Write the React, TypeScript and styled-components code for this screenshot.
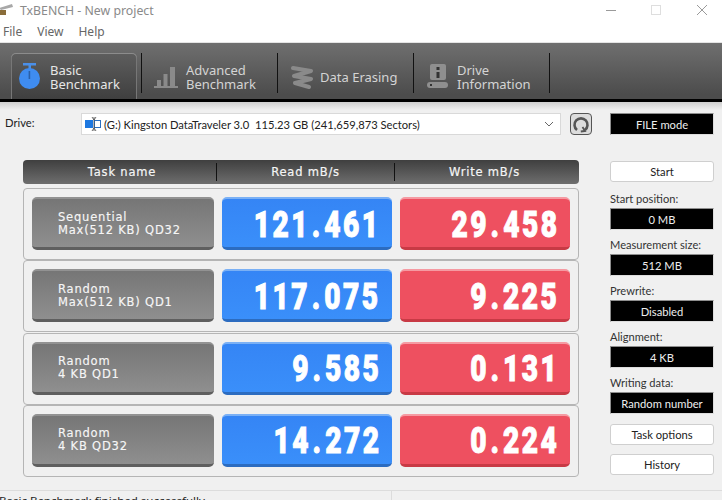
import React from "react";
import styled, { createGlobalStyle } from "styled-components";

const Global = createGlobalStyle`
  html, body { margin: 0; padding: 0; background: #f0f0f0; }
  * { box-sizing: border-box; }
`;
const ui = `"Noto Sans", "Open Sans", sans-serif`;
const small = `"Lato", "Noto Sans", sans-serif`;
const Page = styled.div`
  width: 722px; height: 500px; overflow: hidden; background: #f0f0f0;
  font-family: ${ui}; display: flex; flex-direction: column;
`;
const TitleBar = styled.div`
  height: 21px; background: #fff; display: flex; align-items: center; position: relative;
  padding-left: 20px; font-size: 12.3px; color: #8a8a8a; flex: none;
`;
const WinControls = styled.svg`position: absolute; right: 0; top: 0;`;
const AppIcon = styled.svg`position: absolute; left: -2px; top: 1px;`;
const MenuBar = styled.div`
  height: 21px; background: #fff; display: flex; gap: 15px; padding-left: 3px; align-items: center;
  font-size: 12px; color: #666; flex: none;
`;
const Toolbar = styled.div`
  height: 60px; flex: none; display: flex; align-items: flex-start; padding: 10px 0 0 11px;
  background: linear-gradient(#6f6f6f, #4c4c4c 92%);
  border-top: 1px solid #e4e4e4; border-bottom: 3px solid #000;
`;
const Tab = styled.div<{ $active?: boolean; $gap: number }>`
  width: 126px; height: 46px; display: flex; align-items: center; padding: 1px 0 0 7px; gap: ${(p) => p.$gap}px;
  border-radius: 5px 5px 0 0; flex: none;
  font-size: 13px; line-height: 14px; color: ${(p) => (p.$active ? "#e6e6e6" : "#d4d4d4")};
  ${(p) => p.$active && "background: linear-gradient(#5e5e5e, #3f3f3f); box-shadow: inset 0 1px 0 #8c8c8c, inset 1px 0 0 #777, inset -1px 0 0 #777;"}
`;
const TabIcon = styled.div`width: 24px; height: 30px; flex: none; display: flex; align-items: center; justify-content: center;`;
const Sep = styled.div`width: 1px; height: 40px; background: #111; flex: none; margin: 0 5px 0 4px;`;
const Shade = styled.div`height: 8px; background: linear-gradient(#cfcfcf, #f0f0f0); flex: none;`;
const DriveRow = styled.div`
  display: flex; align-items: center; height: 22px; margin-top: 3px; padding-left: 5px; padding-right: 8px; flex: none;
`;
const DriveLabel = styled.div`width: 76px; font-family: ${small}; font-size: 11.2px; color: #222; margin-top: -3px;`;
const Combo = styled.div`
  width: 480px; height: 22px; background: #fff; border: 1px solid #d9d9d9; display: flex; align-items: center;
  padding: 0 6px 0 3px; font-family: ${small}; font-size: 11.2px; color: #222; white-space: pre; gap: 0;
`;
const ComboText = styled.span`flex: 1;`;
const Refresh = styled.div`
  width: 22px; height: 22px; margin-left: 9px; border: 1px solid #555; border-radius: 4px; background: #dcdcdc;
  display: flex; align-items: center; justify-content: center;
`;
const ModeBox = styled.div`
  width: 104px; height: 22px; margin-left: 18px; background: #000; color: #eee; font-family: ${small}; font-size: 11.2px;
  display: flex; align-items: center; justify-content: center; border: 1px solid #8e8e8e; border-right-color: #ddd; border-bottom-color: #ddd;
`;
const Main = styled.div`
  display: flex; padding: 25px 8px 0 23px; gap: 31px; flex: none; height: 355px;
`;
const Left = styled.div`width: 556px; flex: none;`;
const Header = styled.div`
  height: 24px; display: grid; grid-template-columns: 194px 178px 1fr; border-radius: 4px;
  background: linear-gradient(#3f3f3f, #6e6e6e); margin-bottom: 4px;
`;
const HeaderCell = styled.div<{ $sep?: boolean; $shift?: number }>`
  display: flex; align-items: center; justify-content: center; color: #f5f5f5; font-family: "DejaVu Sans", sans-serif;
  font-size: 11.5px; letter-spacing: 0.8px; font-weight: 500; -webkit-text-stroke: 0.2px #f5f5f5;
  border-right: ${(p) => (p.$sep ? "1px solid #111" : "none")};
  margin: 3px 0; padding-bottom: 1px;
  padding-left: ${(p) => Math.max(p.$shift || 0, 0)}px; padding-right: ${(p) => Math.max(-(p.$shift || 0), 0)}px;
`;
const Row = styled.div`
  height: 72px; border: 1px solid #b5b5b5; border-radius: 4px; background: #f0f0f0; margin-bottom: 0.33px;
  display: grid; grid-template-columns: 182px 170px 170px; column-gap: 8px; padding: 8px 0 0 8px;
`;
const TaskBtn = styled.div`
  height: 53px; border-radius: 5px; background: linear-gradient(#767676, #8f8f8f);
  border-top: 2px solid #929292; border-bottom: 3px solid #5f5f5f; padding: 1px 0 0 26px;
  display: flex; flex-direction: column; justify-content: center; color: #f6f6f6;
  font-family: "DejaVu Sans", sans-serif; font-size: 11.5px; line-height: 13px; letter-spacing: 0.8px;
  -webkit-text-stroke: 0.15px #f6f6f6;
`;
const Value = styled.div<{ $bg: string; $top: string; $bottom: string }>`
  height: 53px; border-radius: 5px; background: ${(p) => p.$bg};
  border-top: 2px solid ${(p) => p.$top}; border-bottom: 3px solid ${(p) => p.$bottom};
  display: flex; align-items: center; justify-content: flex-end; padding: 3px 14px 0 0;
  color: #fff; overflow: hidden;
`;
const Digits = styled.span`
  font-family: "Roboto", sans-serif; font-weight: 900; font-size: 36px; letter-spacing: 3.2px; line-height: 1;
  -webkit-text-stroke: 1px #fff;
  display: inline-block; transform: scaleX(0.78); transform-origin: right center; white-space: nowrap; margin-right: -3px;
`;
const Dot = styled.span`margin: 0 2px;`;
const Right = styled.div`width: 104px; flex: none; display: flex; flex-direction: column; padding-top: 1px;`;
const Btn = styled.div`
  height: 21px; background: #fff; border: 1px solid #cfcfcf; border-radius: 3px; flex: none;
  display: flex; align-items: center; justify-content: center; font-family: ${small}; font-size: 11.2px; color: #222;
`;
const Field = styled.div`height: 46px; display: flex; flex-direction: column; flex: none;`;
const FieldLabel = styled.div`height: 16px; line-height: 14px; font-family: ${small}; font-size: 11.1px; color: #333; white-space: nowrap;`;
const FieldBox = styled(ModeBox)`margin-left: 0;`;
const Fields = styled.div`margin-top: 10px; margin-bottom: 2px;`;
const Gap = styled.div`height: 9px; flex: none;`;
const Status = styled.div`
  height: 20px; border-top: 1px solid #dcdcdc; display: flex; flex: none; font-size: 11.5px; color: #222;
`;
const StatusText = styled.div`width: 393px; border-right: 1px solid #dcdcdc; padding-top: 3px; margin-left: -1px; line-height: 14px; white-space: nowrap;`;

const Stopwatch = () => (
  <svg width="24" height="28" viewBox="0 0 24 28">
    <rect x="5" y="0" width="13" height="2.5" fill="#4a8fe8" />
    <rect x="10.5" y="2" width="2.5" height="4" fill="#4a8fe8" />
    <circle cx="11.5" cy="15.5" r="10.5" fill="#3f8cf0" />
    <rect x="10.6" y="8" width="1.6" height="8" fill="#2a5fa8" />
  </svg>
);
const Bars = () => (
  <svg width="24" height="24" viewBox="0 0 24 24" fill="#8a8a8a">
    <rect x="3" y="15" width="4" height="7" />
    <rect x="9.5" y="9" width="4" height="13" />
    <rect x="16" y="2" width="5" height="20" />
    <rect x="0" y="21" width="24" height="2" />
  </svg>
);
const Spring = () => (
  <svg width="24" height="24" viewBox="0 0 24 24" fill="none" stroke="#8a8a8a" strokeWidth="4" strokeLinecap="round" strokeLinejoin="round">
    <path d="M3 3 L21 6 L4 11 L21 14 L5 18 L19 22" />
  </svg>
);
const DriveInfo = () => (
  <svg width="22" height="26" viewBox="0 0 22 26" fill="#8f8f8f">
    <rect x="3" y="0" width="16" height="16" rx="2" />
    <rect x="0" y="18" width="21" height="6" rx="3" />
    <rect x="9.5" y="3" width="3" height="3" fill="#333" />
    <rect x="9.5" y="8" width="3" height="6" fill="#333" />
    <rect x="3" y="20" width="2" height="2" fill="#333" />
  </svg>
);

const rows = [
  ["Sequential", "Max(512 KB) QD32", "121", "461", "29", "458"],
  ["Random", "Max(512 KB) QD1", "117", "075", "9", "225"],
  ["Random", "4 KB QD1", "9", "585", "0", "131"],
  ["Random", "4 KB QD32", "14", "272", "0", "224"],
];
const fields = [
  ["Start position:", "0 MB"],
  ["Measurement size:", "512 MB"],
  ["Prewrite:", "Disabled"],
  ["Alignment:", "4 KB"],
  ["Writing data:", "Random number"],
];

export default function App() {
  return (
    <Page>
      <Global />
      <TitleBar>
        <AppIcon width="16" height="16" viewBox="0 0 16 16">
          <path d="M1 7 L14 3 L15 6 L3 9 Z" fill="#a8a8a8" />
          <rect x="0" y="9" width="8" height="5" fill="#8a6d3a" />
        </AppIcon>
        TxBENCH - New project
        <WinControls width="130" height="21" viewBox="0 0 130 21" fill="none" stroke="#9a9a9a" strokeWidth="1">
          <path d="M14 10.5 H24" />
          <rect x="59.5" y="5.5" width="9" height="9" stroke="#dedede" />
          <path d="M105 5 L115 15 M115 5 L105 15" />
        </WinControls>
      </TitleBar>
      <MenuBar>
        <span>File</span>
        <span>View</span>
        <span>Help</span>
      </MenuBar>
      <Toolbar>
        <Tab $active $gap={8}><TabIcon><Stopwatch /></TabIcon><span>Basic<br />Benchmark</span></Tab>
        <Sep />
        <Tab $gap={8}><TabIcon><Bars /></TabIcon><span>Advanced<br />Benchmark</span></Tab>
        <Sep />
        <Tab $gap={6}><TabIcon><Spring /></TabIcon><span>Data Erasing</span></Tab>
        <Sep />
        <Tab $gap={7}><TabIcon><DriveInfo /></TabIcon><span>Drive<br />Information</span></Tab>
        <Sep />
      </Toolbar>
      <Shade />
      <DriveRow>
        <DriveLabel>Drive:</DriveLabel>
        <Combo>
          <svg width="19" height="14" viewBox="0 0 19 14">
            <rect x="0" y="3" width="8" height="8" fill="#1e78e0" />
            <rect x="9.5" y="3.5" width="6" height="7" fill="#fff" stroke="#2a6fc0" />
            <path d="M7 0 L9 3 L11 0 M7 14 L9 11 L11 14 M9 0 V14" fill="none" stroke="#444" strokeWidth="0.8" />
          </svg>
          <ComboText>(G:) Kingston DataTraveler 3.0  115.23 GB (241,659,873 Sectors)</ComboText>
          <svg width="10" height="6" viewBox="0 0 10 6" fill="none" stroke="#666"><path d="M1 1 L5 5 L9 1" /></svg>
        </Combo>
        <Refresh>
          <svg width="18" height="18" viewBox="0 0 18 18" fill="none" stroke="#555" strokeWidth="2.6">
            <path d="M5 15 A6.5 6.5 0 1 1 13 15" />
            <path d="M10.5 12 L13 16 L8.8 16.5" strokeWidth="1.8" />
          </svg>
        </Refresh>
        <ModeBox>FILE mode</ModeBox>
      </DriveRow>
      <Main>
        <Left>
          <Header>
            <HeaderCell $sep $shift={5}>Task name</HeaderCell>
            <HeaderCell $sep>Read mB/s</HeaderCell>
            <HeaderCell $shift={-5}>Write mB/s</HeaderCell>
          </Header>
          {rows.map((r, i) => (
            <Row key={i}>
              <TaskBtn><span>{r[0]}</span><span>{r[1]}</span></TaskBtn>
              <Value $bg="linear-gradient(#3585f5, #3a8ffa)" $top="#7ab0f5" $bottom="#2c6cc0"><Digits>{r[2]}<Dot>.</Dot>{r[3]}</Digits></Value>
              <Value $bg="#ee5060" $top="#f59aa2" $bottom="#c83a45"><Digits>{r[4]}<Dot>.</Dot>{r[5]}</Digits></Value>
            </Row>
          ))}
        </Left>
        <Right>
          <Btn>Start</Btn>
          <Fields>
            {fields.map((f) => (
              <Field key={f[0]}>
                <FieldLabel>{f[0]}</FieldLabel>
                <FieldBox>{f[1]}</FieldBox>
              </Field>
            ))}
          </Fields>
          <Btn>Task options</Btn>
          <Gap />
          <Btn>History</Btn>
        </Right>
      </Main>
      <Status>
        <StatusText>Basic Benchmark finished successfully.</StatusText>
      </Status>
    </Page>
  );
}
